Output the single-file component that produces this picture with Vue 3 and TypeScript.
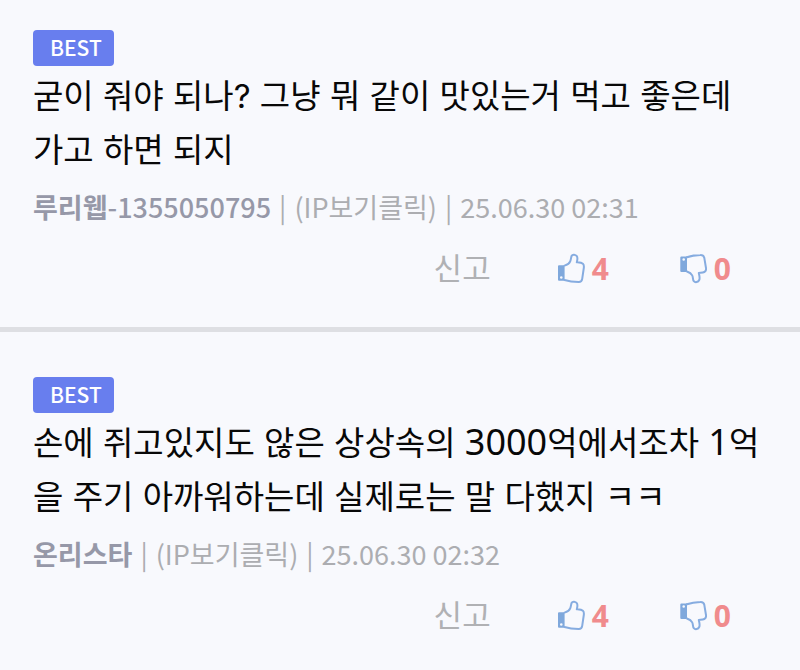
<script setup lang="ts">
interface Comment {
  id: number
  text: string
  author: string
  authorNumber: string
  date: string
  likes: number
  dislikes: number
}

const comments: Comment[] = [
  {
    id: 1,
    text: '굳이 줘야 되나? 그냥 뭐 같이 맛있는거 먹고 좋은데 가고 하면 되지',
    author: '루리웹',
    authorNumber: '-1355050795',
    date: '25.06.30 02:31',
    likes: 4,
    dislikes: 0,
  },
  {
    id: 2,
    text: '손에 쥐고있지도 않은 상상속의 3000억에서조차 1억을 주기 아까워하는데 실제로는 말 다했지 ㅋㅋ',
    author: '온리스타',
    authorNumber: '',
    date: '25.06.30 02:32',
    likes: 4,
    dislikes: 0,
  },
]

// Digits are set in a larger Latin face than the Hangul around them.
const split = (text: string): string[] => text.split(/(\d+)/)
</script>

<template>
  <main class="comments">
    <article v-for="comment in comments" :key="comment.id" class="comment">
      <span class="badge">BEST</span>
      <p class="text"><template v-for="(part, i) in split(comment.text)" :key="i"><span v-if="i % 2 === 1" class="latin">{{ part }}</span><template v-else>{{ part }}</template></template></p>
      <p class="meta">
        <strong class="author">{{ comment.author }}<span v-if="comment.authorNumber" class="number">{{ comment.authorNumber }}</span></strong>
        <span>|</span>
        <span>(IP보기클릭)</span>
        <span>|</span>
        <time>{{ comment.date }}</time>
      </p>
      <div class="actions">
        <button type="button" class="action report">신고</button>
        <button type="button" class="action vote">
          <svg class="thumb" viewBox="0 0 28 31" aria-hidden="true">
            <path class="cuff" fill-rule="evenodd" d="M2 12.3H7.6V27.7H2A1 1 0 0 1 1 26.7V13.3A1 1 0 0 1 2 12.3ZM4.3 23.2A1.3 1.3 0 1 0 4.3 25.8A1.3 1.3 0 1 0 4.3 23.2Z" />
            <path class="hand" d="M7.5 12.6C10 12 12.3 10.6 13.2 8.4C14.1 6.2 14 4.1 14.7 2.7C15.5 1.1 18.6 1.3 19.9 3.3C21 5 20.2 7.4 19.8 9.3C22 9.5 24.5 9.6 25.9 10.8C27.2 11.9 27 13.5 26.8 15L25.2 25.9C24.9 28 23.8 29.2 21.6 29.1C16.5 28.9 12 28.3 7.5 27" />
          </svg>
          <span class="count">{{ comment.likes }}</span>
        </button>
        <button type="button" class="action vote">
          <svg class="thumb" viewBox="0 0 28 31" aria-hidden="true">
            <path class="cuff" fill-rule="evenodd" d="M2.3 3.6H8V18.9H2.3A1 1 0 0 1 1.3 17.9V4.6A1 1 0 0 1 2.3 3.6ZM4.7 5.2A1.3 1.3 0 1 0 4.7 7.8A1.3 1.3 0 1 0 4.7 5.2Z" />
            <path class="hand" d="M7.9 4.2C12 2.7 16.5 2 21.3 1.9C23.6 1.8 24.9 2.7 25.3 4.8L27 15C27.3 17 26.8 18.3 25.3 19C23.8 19.7 21.9 19.7 19.8 20C20.3 22.4 21.2 25 20.2 27C19.2 29.2 16.3 29.9 14.8 28.2C13.6 26.8 14.3 24.5 13.2 22.4C12.2 20.4 10.2 19.3 7.9 18.5" />
          </svg>
          <span class="count">{{ comment.dislikes }}</span>
        </button>
      </div>
    </article>
  </main>
</template>

<style>
body {
  margin: 0;
  background: #f8f9fd;
}
</style>

<style scoped>
.comments {
  font-family: "Noto Sans CJK KR", sans-serif;
  background: #f8f9fd;
}

.comment {
  display: flex;
  flex-direction: column;
  align-items: flex-start;
  padding: 45px 33px 29px;
}

.comment:first-child {
  padding-top: 30px;
}

.comment + .comment {
  border-top: 5px solid #dedfe3;
}

.badge {
  box-sizing: border-box;
  height: 36px;
  padding: 0 12px 0 17px;
  border-radius: 4px;
  background: #687eee;
  color: #fff;
  font-size: 21px;
  font-weight: 500;
  line-height: 34px;
}

.text {
  margin: 3px 0 0;
  color: #080808;
  font-family: Inter, "Noto Sans CJK KR", sans-serif;
  font-size: 33px;
  line-height: 54px;
  word-break: break-all;
}

.latin {
  font-family: "Noto Sans", sans-serif;
  font-size: 36px;
  line-height: 36px;
}

.meta {
  display: flex;
  flex-wrap: wrap;
  column-gap: 8px;
  margin: 10px 0 0;
  color: #acadb1;
  font-size: 27px;
  font-weight: 400;
  line-height: 40px;
}

.author {
  color: #9698a8;
  font-weight: 700;
}

.number {
  font-weight: 500;
}

.actions {
  display: flex;
  align-self: stretch;
  justify-content: flex-end;
  gap: 66px;
  margin-top: 11px;
  padding-right: 36px;
}

.action {
  display: flex;
  align-items: center;
  gap: 7px;
  height: 60px;
  padding: 0;
  border: 0;
  background: none;
  font-family: inherit;
  cursor: pointer;
}

.vote + .vote {
  margin-left: 4px;
}

.report {
  padding-bottom: 4px;
  color: #b0b1b4;
  font-size: 31px;
  font-weight: 400;
}

.thumb {
  width: 28px;
  height: 31px;
}

.cuff {
  fill: #7fa8dc;
}

.hand {
  fill: none;
  stroke: #86ace0;
  stroke-width: 2;
  stroke-linejoin: round;
  stroke-linecap: round;
}

.count {
  color: #f08b8d;
  font-family: "Noto Sans", sans-serif;
  font-size: 30px;
  font-weight: 700;
}
</style>
